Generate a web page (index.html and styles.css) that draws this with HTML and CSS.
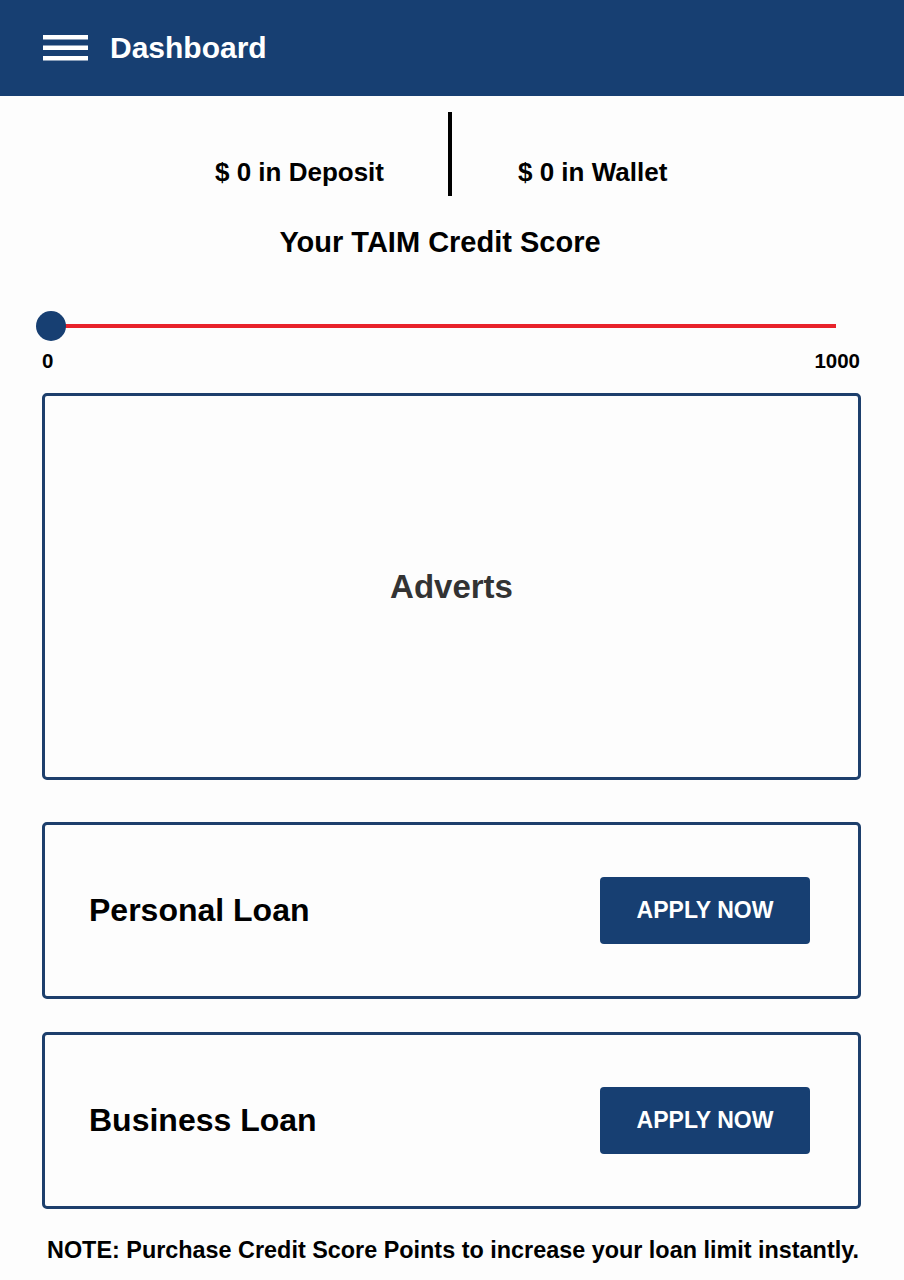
FILE: index.html
```html
<!DOCTYPE html>
<html lang="en">
<head>
<meta charset="utf-8">
<title>Dashboard</title>
<link rel="stylesheet" href="styles.css">
</head>
<body>
<header class="header">
  <svg class="menu-icon" width="45" height="27" viewBox="0 0 45 27" aria-hidden="true">
    <rect x="0" y="0" width="45" height="4.5" fill="#fff"/>
    <rect x="0" y="10.5" width="45" height="4.5" fill="#fff"/>
    <rect x="0" y="21" width="45" height="4.5" fill="#fff"/>
  </svg>
  <h1 class="header-title">Dashboard</h1>
</header>

<section class="stats">
  <div class="stat stat-left">$ 0 in Deposit</div>
  <div class="stat-divider"></div>
  <div class="stat stat-right">$ 0 in Wallet</div>
</section>

<h2 class="score-title">Your TAIM Credit Score</h2>

<div class="slider">
  <div class="slider-track"></div>
  <div class="slider-thumb"></div>
</div>
<div class="scale">
  <span>0</span>
  <span>1000</span>
</div>

<div class="adverts">Adverts</div>

<div class="loan-card loan-first">
  <span class="loan-name">Personal Loan</span>
  <button class="apply-btn">APPLY NOW</button>
</div>

<div class="loan-card loan-second">
  <span class="loan-name">Business Loan</span>
  <button class="apply-btn">APPLY NOW</button>
</div>

<p class="note">NOTE: Purchase Credit Score Points to increase your loan limit instantly.</p>
</body>
</html>
```

FILE: styles.css
```css
* { box-sizing: border-box; }

body {
  margin: 0;
  background: #fdfdfd;
  font-family: "Liberation Sans", Arial, sans-serif;
  color: #000;
}

.header {
  height: 96px;
  background: #173f72;
  display: flex;
  align-items: center;
  padding-left: 43px;
  gap: 22px;
}

.menu-icon { display: block; }

.header-title {
  margin: 0;
  color: #fff;
  font-size: 30px;
  font-weight: bold;
  line-height: 34px;
}

.stats {
  display: grid;
  grid-template-columns: 448px 4px 1fr;
  height: 84px;
  margin-top: 16px;
}

.stat {
  font-size: 26px;
  font-weight: bold;
  line-height: 30px;
  align-self: end;
  margin-bottom: 9px;
}

.stat-left { justify-self: end; padding-right: 64px; }
.stat-right { justify-self: start; padding-left: 66px; }

.stat-divider { background: #000; }

.score-title {
  margin: 30px 0 0;
  padding-right: 24px;
  text-align: center;
  font-size: 29px;
  line-height: 32px;
  font-weight: bold;
}

.slider {
  position: relative;
  height: 30px;
  margin: 53px 68px 0 36px;
  display: flex;
  align-items: center;
}

.slider-track {
  flex: 1;
  height: 4px;
  margin-left: 16px;
  background: #e8232b;
}

.slider-thumb {
  position: absolute;
  left: 0;
  top: 0;
  width: 30px;
  height: 30px;
  border-radius: 50%;
  background: #173f72;
}

.scale {
  display: flex;
  justify-content: space-between;
  margin-top: 8px;
  padding: 0 44px 0 42px;
  font-size: 20.5px;
  line-height: 24px;
  font-weight: bold;
}

.adverts {
  margin: 20px 43px 0 42px;
  height: 387px;
  border: 3px solid #1d3f6c;
  border-radius: 5px;
  display: flex;
  align-items: center;
  justify-content: center;
  font-size: 33px;
  font-weight: bold;
  color: #333;
}

.loan-card {
  margin: 0 43px 0 42px;
  height: 177px;
  border: 3px solid #1d3f6c;
  border-radius: 5px;
  display: flex;
  align-items: center;
  justify-content: space-between;
  padding: 0 48px 0 44px;
}

.loan-first { margin-top: 42px; }
.loan-second { margin-top: 33px; }

.loan-name {
  font-size: 32px;
  font-weight: bold;
}

.apply-btn {
  width: 210px;
  height: 67px;
  border: none;
  border-radius: 4px;
  background: #173f72;
  color: #fff;
  font-family: "Liberation Sans", Arial, sans-serif;
  font-size: 23px;
  font-weight: bold;
  padding: 0;
}

.note {
  margin: 28px 0 0;
  padding-left: 2px;
  text-align: center;
  font-size: 23.4px;
  line-height: 26px;
  font-weight: bold;
}
```
